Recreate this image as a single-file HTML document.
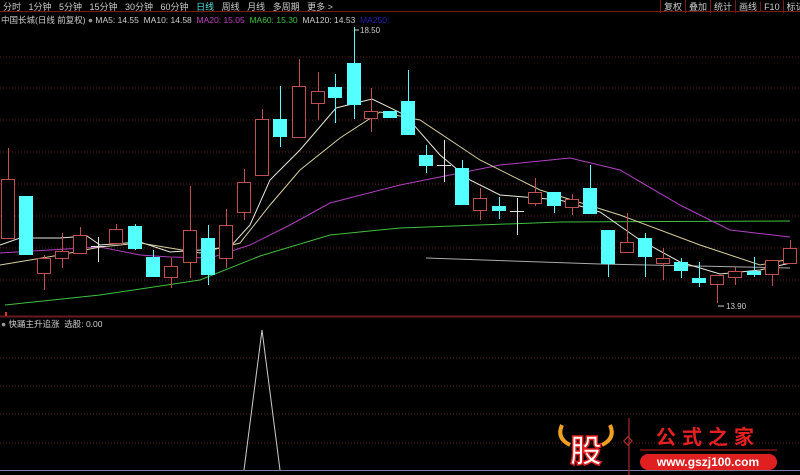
<!DOCTYPE html>
<html><head><meta charset="utf-8"><style>
body{margin:0;background:#000;width:800px;height:475px;overflow:hidden;font-family:"Liberation Sans","Noto Sans CJK SC",sans-serif;}
.t{position:absolute;font-size:9px;white-space:nowrap;}
</style></head><body>
<svg width="800" height="475" style="position:absolute;left:0;top:0" xmlns="http://www.w3.org/2000/svg">
<rect width="800" height="475" fill="#000"/>
<line x1="0" y1="11.5" x2="800" y2="11.5" stroke="#7a1a1a"/>
<g stroke="#5a1e1e" stroke-dasharray="1,2">
<line x1="0" y1="57" x2="800" y2="57"/><line x1="0" y1="88" x2="800" y2="88"/><line x1="0" y1="120" x2="800" y2="120"/><line x1="0" y1="152" x2="800" y2="152"/><line x1="0" y1="184" x2="800" y2="184"/><line x1="0" y1="216" x2="800" y2="216"/><line x1="0" y1="248" x2="800" y2="248"/><line x1="0" y1="280" x2="800" y2="280"/>
<line x1="0" y1="358" x2="800" y2="358"/><line x1="0" y1="386" x2="800" y2="386"/><line x1="0" y1="414" x2="800" y2="414"/><line x1="0" y1="443" x2="800" y2="443"/>
</g>
<line x1="0" y1="316.5" x2="800" y2="316.5" stroke="#6a1a1a" stroke-width="2"/>
<g fill="none" stroke-width="1">
<polyline stroke="#3fbf3f" points="5,305 100,295 200,280 260,256 330,235 400,228 560,222 790,221"/>
<polyline stroke="#b040c0" points="0,253 50,250 100,247 140,255 170,257 210,258 250,245 290,225 330,203 400,185 500,165 570,158 620,170 680,205 730,230 790,237"/>
<polyline stroke="#aaa" points="426,258 600,264 790,268"/>
<polyline stroke="#e8e8d8" points="0,245 20,238 60,238 87,236 100,245 140,242 170,252 200,250 230,247 250,225 270,180 300,150 336,108 372,99 405,115 440,155 470,180 500,195 560,200 600,212 640,240 680,262 720,274 760,270 795,262"/>
<polyline stroke="#d8d0a0" points="0,265 60,255 100,247 140,243 200,253 240,243 270,205 300,170 340,138 380,112 420,120 480,160 540,190 620,215 700,245 760,265 795,258"/>
</g>
<g id="c"></g>
<polyline fill="none" stroke="#ccc" points="244,470 262,330 280,470"/>
<line x1="0" y1="470.5" x2="800" y2="470.5" stroke="#8080a0"/>
<line x1="6" y1="312" x2="6" y2="316" stroke="#e03030" stroke-width="2"/>
<text x="360" y="33" fill="#ccc" font-size="8" font-family="Liberation Sans">18.50</text>
<line x1="354" y1="30" x2="359" y2="30" stroke="#ccc"/>
<text x="726" y="309" fill="#ccc" font-size="8" font-family="Liberation Sans">13.90</text>
<line x1="718" y1="306" x2="724" y2="306" stroke="#ccc"/>
<line x1="629" y1="418" x2="629" y2="475" stroke="#c03030"/>
<rect x="625" y="438" width="6" height="6" transform="rotate(45 628 441)" fill="none" stroke="#c03030"/>
<rect x="640" y="454" width="137" height="16" rx="8" fill="#e02020"/>
<line x1="640" y1="450" x2="777" y2="450" stroke="#c02020"/>
<text x="708" y="466" fill="#fff" font-size="12" font-weight="bold" text-anchor="middle" font-family="Liberation Sans">www.gszj100.com</text>
<text x="708" y="444" fill="#e82020" font-size="20" font-weight="bold" text-anchor="middle" letter-spacing="6" font-family="Noto Sans CJK SC">公式之家</text>
<path d="M562,425 Q556,438 570,445 M610,425 Q616,438 602,445" stroke="#f0a020" stroke-width="4" fill="none"/>
<text x="586" y="462" fill="#fff" stroke="#e02020" stroke-width="1.5" font-size="32" font-weight="bold" text-anchor="middle" font-family="Noto Sans CJK SC">股</text>
</svg>
<script>
var C=[[8,0,179,238,148,238,0],[26,1,196,255,196,255],[44,0,258,273,255,290],[62,0,251,258,233,268],[80,0,235,253,227,253],[98,2,246,246,237,262],[116,0,229,243,224,243],[135,1,226,249,224,250],[153,1,257,277,250,277],[171,0,266,277,258,288],[190,0,230,262,186,278],[208,1,238,275,225,285],[226,0,225,258,209,268],[244,0,182,212,169,220],[262,0,119,175,109,175],[280,1,119,137,86,147],[299,0,86,137,59,137],[318,0,91,103,72,120],[335,1,87,98,74,123],[354,1,63,105,27,119],[371,0,111,118,88,132],[390,1,111,118,111,118],[408,1,101,135,70,135],[426,1,155,166,145,173],[444,2,165,165,140,182],[462,1,168,205,160,205],[480,0,198,210,188,220],[499,1,206,211,197,219],[517,2,211,211,198,235],[535,0,192,203,178,206],[554,1,192,206,192,213],[572,0,199,207,194,215],[590,1,188,214,165,214],[608,1,230,264,230,277],[627,0,242,252,213,252],[645,1,238,257,233,277],[663,0,258,263,248,280],[681,1,262,271,258,278],[699,1,278,283,262,287],[717,0,275,284,275,303],[735,0,271,277,267,285],[754,1,271,275,257,277],[772,0,260,274,260,286],[790,0,248,263,240,263]];
var s='';C.forEach(function(c){var x=c[0],t=c[1];var col=t==1?'#54ffff':(t==2?'#e0e0e0':'#c05050');
s+='<line x1="'+(x+.5)+'" y1="'+c[4]+'" x2="'+(x+.5)+'" y2="'+c[5]+'" stroke="'+col+'"/>';
if(t==1)s+='<rect x="'+(x-7)+'" y="'+c[2]+'" width="14" height="'+(c[3]-c[2])+'" fill="#54ffff"/>';
else if(t==2)s+='<line x1="'+(x-7)+'" y1="'+(c[2]+.5)+'" x2="'+(x+7)+'" y2="'+(c[2]+.5)+'" stroke="#e0e0e0"/>';
else s+='<rect x="'+(x-6.5)+'" y="'+(c[2]+.5)+'" width="13" height="'+(c[3]-c[2])+'" fill="#000" stroke="#c05050"/>';});
document.getElementById('c').innerHTML=s;
</script>
<div class="t" style="left:3px;top:0;color:#ccc">分时&nbsp;&nbsp; 1分钟&nbsp;&nbsp; 5分钟&nbsp;&nbsp; 15分钟&nbsp;&nbsp; 30分钟&nbsp;&nbsp; 60分钟&nbsp;&nbsp; <span style="color:#54e0e0">日线</span>&nbsp;&nbsp; 周线&nbsp;&nbsp; 月线&nbsp;&nbsp; 多周期&nbsp;&nbsp; 更多 &gt;</div>
<div class="t" style="left:1px;top:14px;color:#ccc;font-size:8.5px">中国长城(日线 前复权) <span style="color:#999">●</span> MA5: 14.55&nbsp; MA10: 14.58&nbsp; <span style="color:#c040c0">MA20: 15.05</span>&nbsp; <span style="color:#40c040">MA60: 15.30</span>&nbsp; MA120: 14.53&nbsp; <span style="color:#2020b0">MA250:</span></div>
<div class="t" style="left:660px;top:0;color:#ccc;font-size:9px">
<span style="display:inline-block;border-left:1px solid #7a1a1a;padding:0 3px">复权</span><span style="display:inline-block;border-left:1px solid #7a1a1a;padding:0 3px">叠加</span><span style="display:inline-block;border-left:1px solid #7a1a1a;padding:0 3px">统计</span><span style="display:inline-block;border-left:1px solid #7a1a1a;padding:0 3px">画线</span><span style="display:inline-block;border-left:1px solid #7a1a1a;padding:0 3px">F10</span><span style="display:inline-block;border-left:1px solid #7a1a1a;padding:0 3px">标记</span><span style="display:inline-block;border-left:1px solid #7a1a1a;padding:0 2px">+自</span></div>
<div class="t" style="left:1px;top:318px;color:#ccc;font-size:8.5px"><span style="color:#999">●</span> 快踊主升追涨&nbsp; 选股: 0.00</div>
</body></html>
